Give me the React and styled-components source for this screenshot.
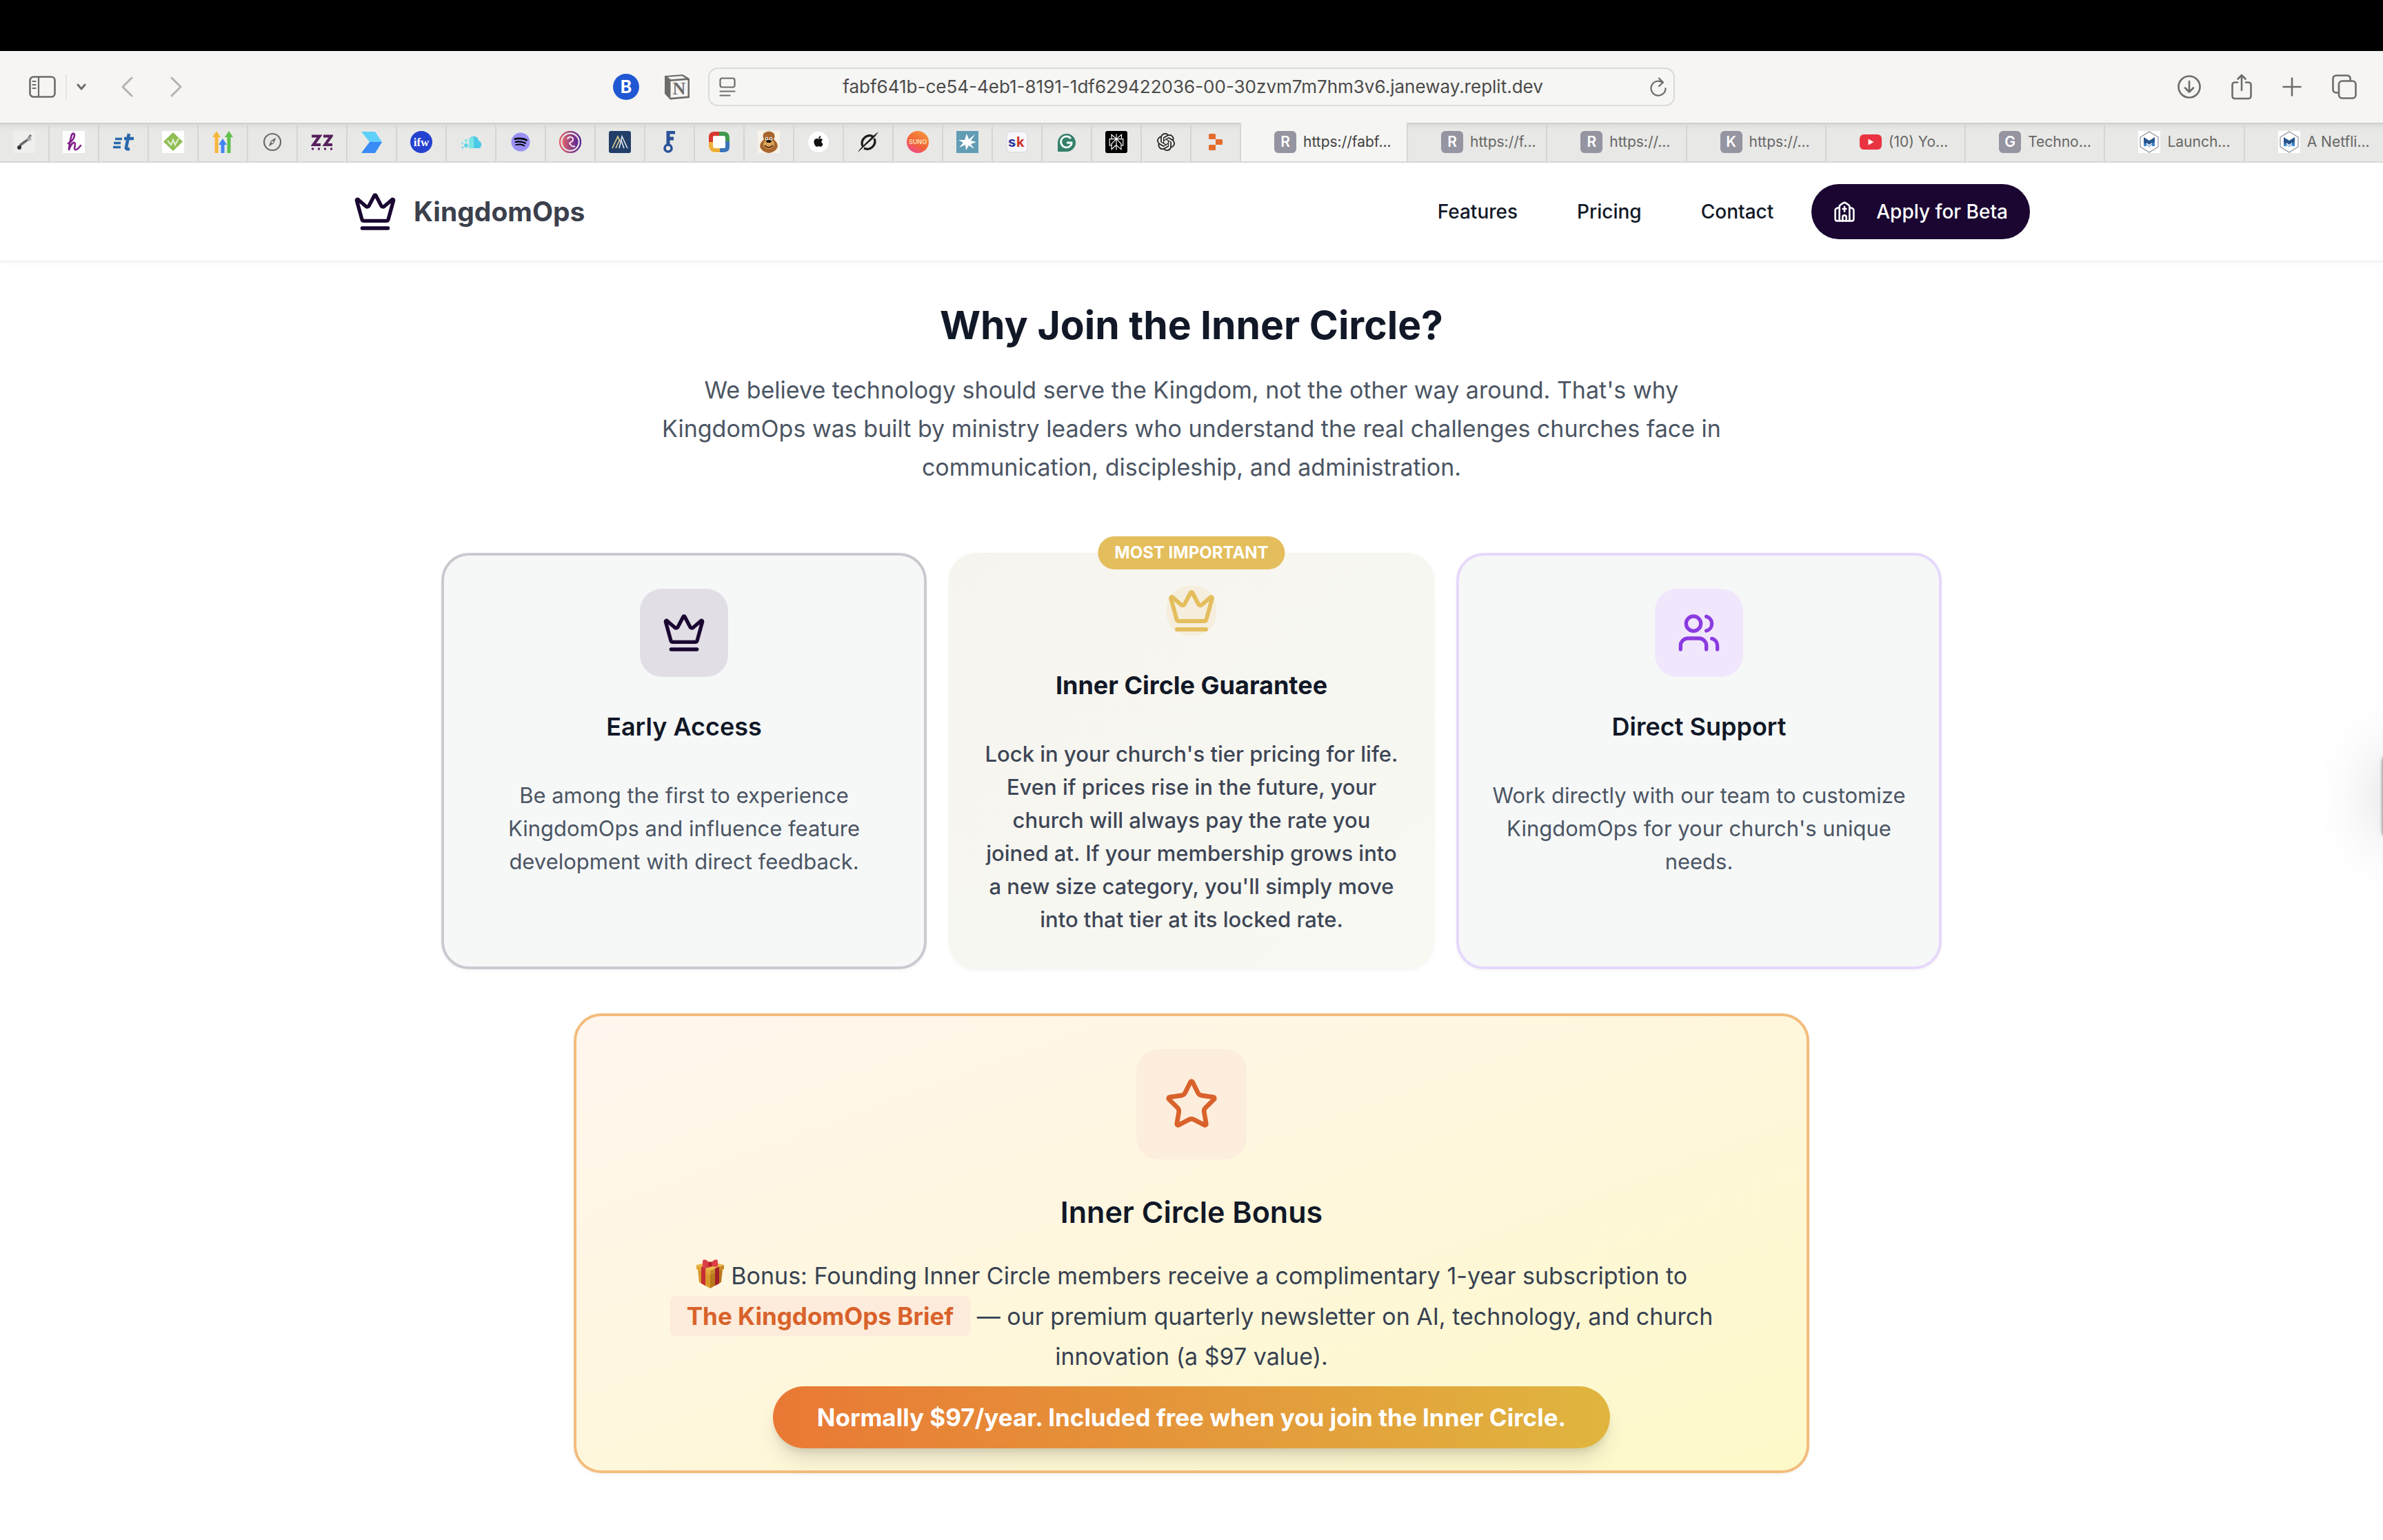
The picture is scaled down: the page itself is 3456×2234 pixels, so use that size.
import React from "react";
import styled, { createGlobalStyle } from "styled-components";
import { Crown, Star, Users } from "lucide-react";
import { FaApple, FaSpotify } from "react-icons/fa";
import { SiOpenai, SiPerplexity, SiReplit } from "react-icons/si";

const GlobalStyle = createGlobalStyle`
  *, *::before, *::after { box-sizing: border-box; }
  body {
    margin: 0;
    background: #ffffff;
    font-family: Inter, "Liberation Sans", sans-serif;
    color: #111827;
    -webkit-font-smoothing: antialiased;
  }
  h1, h2, h3, p { margin: 0; }
  button, input { font: inherit; color: inherit; }
  a { color: inherit; text-decoration: none; }
`;

/* ---------- Browser window ---------- */

const MenuBar = styled.div`
  height: 74px;
  background: #000000;
`;

const Toolbar = styled.div`
  display: grid;
  grid-template-columns: 1fr minmax(600px, 1402px) 1fr;
  align-items: center;
  height: 104px;
  background: #f6f5f3;
  color: #6c6c6a;
`;

const ToolGroup = styled.div`
  display: flex;
  align-items: center;
  gap: 50px;
  padding: 0 ${(p) => p.$right}px 0 ${(p) => p.$left}px;
`;

const ToolSet = styled.div`
  display: flex;
  align-items: center;
  gap: ${(p) => p.$gap}px;
  margin-left: ${(p) => (p.$end ? "auto" : "0")};
`;

const IconButton = styled.button`
  display: flex;
  align-items: center;
  justify-content: center;
  padding: 0;
  border: 0;
  background: none;
  color: ${(p) => (p.$dim ? "#b4b3b1" : "#6c6c6a")};
`;

const Divider = styled.span`
  width: 2px;
  height: 36px;
  background: #e6e5e3;
`;

const AddressBar = styled.div`
  display: flex;
  align-items: center;
  height: 56px;
  padding: 0 10px 0 14px;
  border: 2px solid #dadad8;
  border-radius: 14px;
  background: #f6f6f4;
`;

const AddressInput = styled.input`
  flex: 1;
  min-width: 0;
  padding: 0;
  border: 0;
  outline: 0;
  background: none;
  font-size: 26px;
  line-height: 32px;
  text-align: center;
  color: #4b4b4a;
`;

const TabStrip = styled.div`
  display: flex;
  height: 58px;
  border-bottom: 2px solid #d8d8d6;
  background: #e8e8e6;
`;

const PinnedTab = styled.button`
  display: flex;
  flex: none;
  align-items: center;
  justify-content: center;
  width: 72px;
  padding: 0;
  border: 0;
  border-right: 2px solid #d5d5d3;
  background: linear-gradient(#c8c8c6, #dededc 3px, #e8e8e6 10px);
`;

const Tab = styled.button`
  display: flex;
  flex: ${(p) => (p.$active ? "0 0 242px" : "1 1 0")};
  align-items: center;
  gap: 10px;
  min-width: 0;
  padding: 0 0 0 48px;
  border: 0;
  border-right: 2px solid #d5d5d3;
  background: ${(p) =>
    p.$active ? "#f5f5f3" : "linear-gradient(#c8c8c6, #dededc 3px, #e8e8e6 10px)"};
  color: ${(p) => (p.$active ? "#3f3f3e" : "#666665")};
  font-size: 21px;
  line-height: 32px;
  white-space: nowrap;

  &:last-child { border-right: 0; }
`;

const LetterBadge = styled.span`
  flex: none;
  width: 32px;
  height: 32px;
  border-radius: 6px;
  background: #9594a1;
  color: #ffffff;
  font-size: 21px;
  font-weight: 600;
  line-height: 32px;
  text-align: center;
`;

const Favicon = ({ children, box = 32 }) => (
  <svg width="32" height="32" viewBox={`0 0 ${box} ${box}`} aria-hidden="true">
    {children}
  </svg>
);

const pinnedSites = [
  ["Sketch", (
    <Favicon>
      <rect width="32" height="32" fill="#efefee" />
      <path d="M9 25 L11 20 L22 12 L25 7" fill="none" stroke="#6a6a6a" strokeWidth="3.5" strokeLinecap="round" strokeLinejoin="round" />
      <circle cx="9" cy="24" r="3" fill="#333" />
      <path d="M19 13 L26 6 V14 Z" fill="#a9a9a9" />
    </Favicon>
  )],
  ["Handwriting", (
    <Favicon>
      <rect width="32" height="32" fill="#fff" />
      <path d="M8 18 C13 16 17 10 17 6 C17 2 13 3 12 9 C11 14 9 22 9 28 C10 23 14 16 17 17 C20 18 15 26 18 27 C20 28 23 25 26 21" fill="none" stroke="#82208a" strokeWidth="2.6" strokeLinecap="round" />
    </Favicon>
  )],
  ["Transfer", (
    <Favicon>
      <path d="M4 11.5h10M2 17.5h10M1 23.5h11" stroke="#2968ab" strokeWidth="3.4" />
      <path d="M24 4 L20 24 Q19.500 27 25 26 M17 11 H31" fill="none" stroke="#2968ab" strokeWidth="4.6" />
    </Favicon>
  )],
  ["Growth", (
    <Favicon>
      <rect width="32" height="32" fill="#fff" />
      <path d="M16 2 L30 15.500 L16 29 L2 15.500Z" fill="#8fbd52" />
      <path d="M8 14 L13 20 L16 13 L19 20 L24 11" fill="none" stroke="#dcebc8" strokeWidth="2.4" />
    </Favicon>
  )],
  ["Rankings", (
    <Favicon>
      <path d="M7 32V8" stroke="#f6b73c" strokeWidth="5" />
      <path d="M1 9 L7 0 L13 9Z" fill="#f6b73c" />
      <path d="M16 32V18" stroke="#4285f4" strokeWidth="5" />
      <path d="M10 20 L16 11 L22 20Z" fill="#4285f4" />
      <path d="M25 32V8" stroke="#5fc14a" strokeWidth="5" />
      <path d="M19 9 L25 0 L31 9Z" fill="#5fc14a" />
    </Favicon>
  )],
  ["Start Page", (
    <Favicon>
      <circle cx="16" cy="16" r="12" fill="none" stroke="#6c6c6a" strokeWidth="2.2" />
      <path d="M21.500 9.500 L18 18 L10.500 22.500 L14 14Z" fill="#6c6c6a" />
      <circle cx="16" cy="16" r="1.600" fill="#e8e8e6" />
    </Favicon>
  )],
  ["ZZ", (
    <Favicon>
      <path d="M1 7.500H12.500L3.500 20H14M18 7.500H29.500L20.500 20H31" fill="none" stroke="#57205c" strokeWidth="4.200" />
      <path d="M1 26h30" stroke="#57205c" strokeWidth="3" strokeDasharray="3 6" />
    </Favicon>
  )],
  ["Flow", (
    <Favicon>
      <path d="M1 1 H21 L31 16 H13Z" fill="#5fd0fb" />
      <path d="M13 16 H31 L21 32 H1Z" fill="#3a8af5" />
    </Favicon>
  )],
  ["ifw", (
    <Favicon>
      <circle cx="16" cy="16" r="16" fill="#2441cf" />
      <text x="16" y="22" textAnchor="middle" fontFamily="Liberation Serif, serif" fontWeight="700" fontSize="17" fill="#fff">ifw</text>
    </Favicon>
  )],
  ["Cloud", (
    <Favicon>
      <path d="M13 25 V13 C15 6 26 6 27 14 C33 16 32 25 27 25Z" fill="#4cc9e6" />
      <path d="M13 25 V13 C14 9 18 8 20 9 V25Z" fill="#7ce4e4" />
      <circle cx="9" cy="14" r="2.400" fill="#8fe6ea" />
      <circle cx="9" cy="21" r="3" fill="#63d3e8" />
      <circle cx="3.500" cy="18" r="1.800" fill="#8fe6ea" />
      <circle cx="4" cy="24" r="1.500" fill="#63d3e8" />
    </Favicon>
  )],
  ["Spotify", (
    <Favicon>
      <circle cx="16" cy="16" r="12" fill="#000" />
      <FaSpotify x="2" y="2" size={28} color="#9990f5" />
    </Favicon>
  )],
  ["Relay", (
    <Favicon>
      <defs>
        <linearGradient id="relay" x1="0" x2="1">
          <stop offset="0" stopColor="#e0646a" />
          <stop offset="1" stopColor="#5b2596" />
        </linearGradient>
      </defs>
      <circle cx="16" cy="16" r="15" fill="none" stroke="url(#relay)" strokeWidth="2.400" />
      <circle cx="16" cy="16" r="11.500" fill="url(#relay)" />
      <path d="M12 12 C13 7 21 8 20 13 C20 16 15 16 15 18 C17 20 18 24 23 22" fill="none" stroke="#f6e6ee" strokeWidth="2" />
    </Favicon>
  )],
  ["Summit", (
    <Favicon>
      <rect width="32" height="32" rx="3" fill="#223e69" />
      <path d="M5 25 L13 8 L16 15 M10 25 L16 12" fill="none" stroke="#e8d48e" strokeWidth="1.600" />
      <path d="M15 25 L19 8 L27 25 M22 25 L18 14" fill="none" stroke="#dfe6ee" strokeWidth="1.600" />
    </Favicon>
  )],
  ["Key", (
    <Favicon>
      <path d="M14 20 V2 H24 M14 11 H22" fill="none" stroke="#2a5298" strokeWidth="5" />
      <circle cx="14" cy="25" r="5" fill="none" stroke="#2a5298" strokeWidth="3.600" />
    </Favicon>
  )],
  ["Workspace", (
    <Favicon>
      <rect x="1" y="1" width="30" height="31" rx="9" fill="#fff" />
      <path d="M4 16 V9 Q4 4 9 4 H16" fill="none" stroke="#d8382f" strokeWidth="6" />
      <path d="M16 4 H22 Q28 4 28 10 V15" fill="none" stroke="#3f9a4c" strokeWidth="6" />
      <path d="M28 15 V23 Q28 28 22 28 H17" fill="none" stroke="#3b73b9" strokeWidth="6" />
      <path d="M17 28 H10 Q5 28 4 22 V16" fill="none" stroke="#eeb038" strokeWidth="6" />
      <rect x="7" y="8" width="18" height="17" rx="4" fill="#fff" />
    </Favicon>
  )],
  ["Lion", (
    <Favicon>
      <rect width="32" height="32" fill="#f7f3e6" />
      <path d="M9 3 Q16 -2 23 3 Q26 8 23 12 Q31 19 28 25 Q24 31 16 32 Q8 31 4 25 Q1 19 9 12 Q6 7 9 3Z" fill="#a8662d" />
      <ellipse cx="16" cy="19" rx="8" ry="7" fill="#dba55a" />
      <circle cx="13" cy="11" r="2.200" fill="#fff" />
      <circle cx="19" cy="11" r="2.200" fill="#fff" />
      <circle cx="13" cy="11" r="1" fill="#111" />
      <circle cx="19" cy="11" r="1" fill="#111" />
      <ellipse cx="16" cy="15" rx="4" ry="2" fill="#1c1410" />
      <path d="M10 21 Q16 27 22 21" fill="none" stroke="#5b2f12" strokeWidth="2" />
    </Favicon>
  )],
  ["Apple", (
    <Favicon>
      <circle cx="16" cy="16" r="15" fill="#fff" />
      <FaApple x="7" y="6" size={18} color="#111" />
    </Favicon>
  )],
  ["Grok", (
    <Favicon>
      <path d="M8 22 A11 11 0 0 1 23 8 M25 11 A11 11 0 0 1 10 25" fill="none" stroke="#1b1b1b" strokeWidth="3.200" />
      <path d="M1 31 C6 22 14 17 21 9 L31 1 C26 10 18 15 11 22Z" fill="#1b1b1b" />
    </Favicon>
  )],
  ["Suno", (
    <Favicon>
      <defs>
        <linearGradient id="suno" x1="0.800" y1="0" x2="0.200" y2="1">
          <stop offset="0" stopColor="#f5963a" />
          <stop offset="0.600" stopColor="#f2603a" />
          <stop offset="1" stopColor="#ee4a94" />
        </linearGradient>
      </defs>
      <circle cx="16" cy="16" r="16" fill="url(#suno)" />
      <text x="16" y="19" textAnchor="middle" fontFamily="Inter, sans-serif" fontWeight="600" fontSize="9" fill="#ffe3b8">SUNO</text>
    </Favicon>
  )],
  ["Spark", (
    <Favicon>
      <rect width="32" height="32" fill="#629cb5" />
      <path d="M15 4 L18 12 L27 5 L21 14 L29 16 L21 19 L26 26 L18 21 L14 28 L13 20 L4 24 L10 17 L3 13 L12 13Z" fill="#fff" />
    </Favicon>
  )],
  ["sk", (
    <Favicon>
      <rect x="1" y="1" width="30" height="30" rx="6" fill="#f7f6fa" stroke="#d6d4da" />
      <text x="3" y="23" fontFamily="Inter, sans-serif" fontWeight="700" fontSize="20" fill="#26309a">s</text>
      <text x="15" y="23" fontFamily="Inter, sans-serif" fontWeight="700" fontSize="20" fill="#cf352e">k</text>
    </Favicon>
  )],
  ["Grammarly", (
    <Favicon>
      <path d="M3 30 V16 A13 13 0 1 1 16 30Z" fill="#34806b" />
      <path d="M22 11 A8 8 0 1 0 23 19 V17 H16" fill="none" stroke="#fff" strokeWidth="2.800" />
    </Favicon>
  )],
  ["Perplexity", (
    <Favicon>
      <rect width="32" height="32" rx="3" fill="#000" />
      <SiPerplexity x="4" y="4" size={24} color="#fff" />
    </Favicon>
  )],
  ["OpenAI", (
    <Favicon>
      <SiOpenai x="3" y="3" size={26} color="#222" />
    </Favicon>
  )],
  ["Replit", (
    <Favicon>
      <SiReplit x="4" y="4" size={24} color="#e46c2c" />
    </Favicon>
  )],
];

const YouTubeIcon = () => (
  <Favicon>
    <rect y="5" width="32" height="22" rx="6" fill="#ea3340" />
    <path d="M12.500 11.500 L20.500 16 L12.500 20.500Z" fill="#fff" />
  </Favicon>
);

const HexIcon = () => (
  <Favicon>
    <rect width="32" height="32" fill="#fff" />
    <path d="M16 1 L29 9 V23 L16 31 L3 23 V9Z" fill="none" stroke="#8a8f96" strokeWidth="1.200" />
    <path d="M8 9 L16 14 L24 9 V22 H20 V17 L16 20 L12 17 V22 H8Z" fill="#27548c" />
    <path d="M8 17 L12 19 L16 22 L24 15 V22 H20 V20 L16 23 L12 20 V22 H8Z" fill="#3f86cc" />
  </Favicon>
);

const openTabs = [
  { icon: <LetterBadge>R</LetterBadge>, label: "https://fabf...", active: true },
  { icon: <LetterBadge>R</LetterBadge>, label: "https://f..." },
  { icon: <LetterBadge>R</LetterBadge>, label: "https://..." },
  { icon: <LetterBadge>K</LetterBadge>, label: "https://..." },
  { icon: <YouTubeIcon />, label: "(10) Yo..." },
  { icon: <LetterBadge>G</LetterBadge>, label: "Techno..." },
  { icon: <HexIcon />, label: "Launch..." },
  { icon: <HexIcon />, label: "A Netfli..." },
];

const Glyph = ({ w, h, children, stroke = 2.6 }) => (
  <svg
    width={w}
    height={h}
    viewBox={`0 0 ${w} ${h}`}
    fill="none"
    stroke="currentColor"
    strokeWidth={stroke}
    strokeLinecap="round"
    strokeLinejoin="round"
    aria-hidden="true"
  >
    {children}
  </svg>
);

function BrowserChrome() {
  return (
    <>
      <MenuBar />
      <Toolbar>
        <ToolGroup $left={42} $right={26}>
          <ToolSet $gap={14}>
            <IconButton aria-label="Sidebar">
              <Glyph w={39} h={32}>
                <rect x="1.500" y="1.500" width="36" height="29" rx="5" />
                <path d="M14 2v28M5.500 8h4M5.500 13h4M5.500 18h4" strokeWidth="2.200" />
              </Glyph>
            </IconButton>
            <Divider />
            <IconButton aria-label="Tab groups">
              <Glyph w={14} h={10} stroke={3}><path d="M2 2l5 6 5-6" /></Glyph>
            </IconButton>
          </ToolSet>
          <ToolSet $gap={54}>
            <IconButton $dim aria-label="Back">
              <Glyph w={18} h={30} stroke={3}><path d="M16 2L3 15l13 13" /></Glyph>
            </IconButton>
            <IconButton $dim aria-label="Forward">
              <Glyph w={18} h={30} stroke={3}><path d="M2 2l13 13L2 28" /></Glyph>
            </IconButton>
          </ToolSet>
          <ToolSet $gap={36} $end>
            <IconButton aria-label="B extension">
              <svg width="38" height="38" viewBox="0 0 38 38" aria-hidden="true">
                <circle cx="19" cy="19" r="19" fill="#2058d4" />
                <text x="19" y="28" textAnchor="middle" fontFamily="Inter, sans-serif" fontWeight="700" fontSize="25" fill="#fff">B</text>
              </svg>
            </IconButton>
            <IconButton aria-label="Notion">
              <svg width="38" height="38" viewBox="0 0 38 38" aria-hidden="true">
                <path d="M1 3 L27 1 L37 7 V35 L9 37.500 L1 29Z" fill="#6c6c6a" />
                <path d="M5 4.800 L26 3.200 L31.500 6.500 L10 8.200Z" fill="#f6f5f3" />
                <path d="M9.500 11 L34.500 9 V32.500 L9.500 34.800Z" fill="#f6f5f3" />
                <text x="22" y="30" textAnchor="middle" fontFamily="Liberation Serif, serif" fontWeight="700" fontSize="26" fill="#6c6c6a">N</text>
              </svg>
            </IconButton>
          </ToolSet>
        </ToolGroup>
        <AddressBar>
          <IconButton aria-label="Page menu">
            <Glyph w={24} h={28} stroke={2.2}>
              <rect x="1.500" y="1.500" width="21" height="13" rx="3" />
              <path d="M1.500 20.500h21M1.500 26.500h14" />
            </Glyph>
          </IconButton>
          <AddressInput
            aria-label="Address"
            readOnly
            value="fabf641b-ce54-4eb1-8191-1df629422036-00-30zvm7m7hm3v6.janeway.replit.dev"
          />
          <IconButton aria-label="Reload">
            <Glyph w={24} h={28} stroke={2.2}>
              <path d="M18 7.500A10.500 10.500 0 1 0 22.500 16M13 1.500l6 6-6 5.500" />
            </Glyph>
          </IconButton>
        </AddressBar>
        <ToolGroup $left={40} $right={38}>
          <ToolSet $gap={44} $end>
            <IconButton aria-label="Downloads">
              <Glyph w={34} h={34}>
                <circle cx="17" cy="17" r="15.500" />
                <path d="M17 9v15M11 18.500l6 6 6-6" />
              </Glyph>
            </IconButton>
            <IconButton aria-label="Share">
              <Glyph w={30} h={38}>
                <path d="M9 12.500H5.500Q1.500 12.500 1.500 16V32Q1.500 36 5.500 36H24.500Q28.500 36 28.500 32V16Q28.500 12.500 24.500 12.500H21M15 24V2M9.500 7.500L15 2l5.500 5.500" />
              </Glyph>
            </IconButton>
            <IconButton aria-label="New tab">
              <Glyph w={28} h={28}><path d="M14 1.500v25M1.500 14h25" /></Glyph>
            </IconButton>
            <IconButton aria-label="Tab overview">
              <Glyph w={36} h={36}>
                <rect x="10" y="9.500" width="24.500" height="25" rx="5" />
                <path d="M9.500 26.500H6.500Q1.500 26.500 1.500 22V6.500Q1.500 1.500 6.500 1.500H21.500Q26.500 1.500 26.500 6V9" />
              </Glyph>
            </IconButton>
          </ToolSet>
        </ToolGroup>
      </Toolbar>
      <TabStrip>
        {pinnedSites.map(([name, icon]) => (
          <PinnedTab key={name} aria-label={name}>{icon}</PinnedTab>
        ))}
        {openTabs.map((tab, i) => (
          <Tab key={i} $active={tab.active}>
            {tab.icon}
            <span>{tab.label}</span>
          </Tab>
        ))}
      </TabStrip>
    </>
  );
}

/* ---------- Site ---------- */

const SiteHeader = styled.header`
  border-bottom: 2px solid #f1f1f2;
  box-shadow: 0 2px 6px rgba(0, 0, 0, 0.03);
`;

const HeaderInner = styled.div`
  display: flex;
  align-items: center;
  justify-content: space-between;
  max-width: 2560px;
  height: 142px;
  margin: 0 auto;
  padding: 0 64px;
`;

const Brand = styled.a`
  display: flex;
  align-items: center;
  gap: 24px;
  font-size: 39px;
  font-weight: 700;
  line-height: 56px;
  color: #3b404c;

  svg { color: #1a0631; }
`;

const Nav = styled.nav`
  display: flex;
  align-items: center;
  gap: 24px;
  font-size: 28px;
  font-weight: 500;
  line-height: 40px;
`;

const NavLink = styled.a`
  padding: 0 31px;
`;

const BetaButton = styled.button`
  display: flex;
  align-items: center;
  gap: 30px;
  height: 80px;
  padding: 0 32px;
  border: 0;
  border-radius: 40px;
  background: #1a0631;
  color: #ffffff;
  font-weight: 500;
`;

const Section = styled.main`
  display: flex;
  flex-direction: column;
  align-items: center;
  padding: 56px 64px 96px;
`;

const SectionTitle = styled.h2`
  font-size: 57px;
  font-weight: 700;
  line-height: 72px;
  text-align: center;
`;

const SectionLead = styled.p`
  max-width: 1560px;
  margin-top: 30px;
  font-size: 34px;
  line-height: 56px;
  text-align: center;
  color: #4b5563;
`;

const CardGrid = styled.div`
  display: grid;
  grid-template-columns: repeat(3, 1fr);
  gap: 32px;
  width: 100%;
  max-width: 2176px;
  margin-top: 96px;
`;

const tones = {
  navy: { border: "#cbc8d0", fill: "#f6f8f8", tile: "#e1dfe5", ink: "#1a0631" },
  gold: { fill: "linear-gradient(to bottom right, #f6f4ee, #f8f9f3)", tile: "#f5eedd", ink: "#e4be5d" },
  violet: { border: "#e6d8fc", fill: "#f6f8f8", tile: "#f1e7fd", ink: "#8b3be0" },
};

const Card = styled.article`
  position: relative;
  display: flex;
  flex-direction: column;
  align-items: center;
  padding: 48px;
  border: ${(p) => (p.$tone.border ? `4px solid ${p.$tone.border}` : "0")};
  border-radius: 40px;
  background: ${(p) => p.$tone.fill};
  box-shadow: 0 2px 4px rgba(0, 0, 0, 0.05);
  text-align: center;
`;

const Ribbon = styled.span`
  position: absolute;
  top: -24px;
  left: 50%;
  transform: translateX(-50%);
  padding: 8px 24px;
  border-radius: 24px;
  background: #e4be5d;
  color: #ffffff;
  font-size: 24px;
  font-weight: 700;
  line-height: 32px;
  white-space: nowrap;
`;

const IconTile = styled.div`
  display: flex;
  align-items: center;
  justify-content: center;
  width: ${(p) => p.$size}px;
  height: ${(p) => p.$size}px;
  border-radius: 32px;
  background: ${(p) => p.$fill};
  color: ${(p) => p.$ink};
`;

const CardTitle = styled.h3`
  margin-top: 44px;
  font-size: ${(p) => (p.$large ? 43 : 36)}px;
  font-weight: ${(p) => (p.$strong ? 700 : 600)};
  line-height: ${(p) => (p.$large ? 64 : 56)}px;
`;

const CardText = styled.p`
  margin-top: 48px;
  font-size: 31px;
  font-weight: ${(p) => (p.$strong ? 500 : 400)};
  line-height: 48px;
  color: ${(p) => (p.$strong ? "#3d4656" : "#4b5563")};
`;

const BonusCard = styled.article`
  display: flex;
  flex-direction: column;
  align-items: center;
  width: 100%;
  max-width: 1792px;
  margin-top: 64px;
  padding: 48px 48px 32px;
  border: 4px solid #f3bc7d;
  border-radius: 40px;
  background: linear-gradient(to bottom right, #fff6ee, #fef7dc 50%, #fdf9c8);
  box-shadow: 0 2px 4px rgba(0, 0, 0, 0.05);
  text-align: center;
`;

const BonusText = styled.p`
  max-width: 1560px;
  margin-top: 32px;
  font-size: 34px;
  line-height: 58px;
  color: #374151;

  svg { vertical-align: -6px; }
`;

const BriefTag = styled.strong`
  display: inline-block;
  padding: 0 24px;
  border-radius: 8px;
  background: #fdecdb;
  color: #d9622b;
  font-size: 35px;
  font-weight: 700;
`;

const Offer = styled.div`
  margin-top: 14px;
  padding: 16px 64px;
  border-radius: 45px;
  background: linear-gradient(90deg, #e97935, #e0b53f);
  box-shadow: 0 20px 30px -6px rgba(0, 0, 0, 0.12), 0 8px 12px -4px rgba(0, 0, 0, 0.1);
  color: #ffffff;
  font-size: 35px;
  font-weight: 700;
  line-height: 58px;
`;

const SidePanelHandle = styled.div`
  position: fixed;
  top: 1090px;
  right: -38px;
  width: 40px;
  height: 130px;
  border-radius: 16px;
  background: #b9b9b9;
  box-shadow: 0 0 4px rgba(0, 0, 0, 0.25), 0 0 90px rgba(0, 0, 0, 0.22);
`;

const ChurchIcon = () => (
  <svg
    width="32"
    height="32"
    viewBox="0 0 24 24"
    fill="none"
    stroke="currentColor"
    strokeWidth="2"
    strokeLinecap="round"
    strokeLinejoin="round"
    aria-hidden="true"
  >
    <path d="M6.500 22V6.500C6.500 5.500 7 5 8 4.400L10.800 2.500Q12 1.700 13.200 2.500L16 4.400C17 5 17.500 5.500 17.500 6.500V22" />
    <path d="M6.500 7.500 3.800 8.200Q2 8.800 2 10.500V20Q2 22 4 22H20Q22 22 22 20V10.500Q22 8.800 20.200 8.200L17.500 7.500" />
    <path d="M12 6.800v5M10.200 9h3.600" />
    <path d="M10 22v-4a2 2 0 0 1 4 0v4" />
  </svg>
);

const Gift = () => (
  <svg width="42" height="42" viewBox="0 0 42 42" aria-hidden="true">
    <path d="M3 14 L21 22 V42 L5 33Z" fill="#d99a2b" />
    <path d="M39 14 L21 22 V42 L37 33Z" fill="#b9781d" />
    <path d="M1 8 L21 3 L41 8 L21 16Z" fill="#e9b94a" />
    <path d="M1 8 L21 16 V23 L1 14Z" fill="#e3a836" />
    <path d="M41 8 L21 16 V23 L41 14Z" fill="#c98a25" />
    <path d="M8 10.500 L14 13 V38 L8 35Z" fill="#c62f35" />
    <path d="M34 10.500 L28 13 V38 L34 35Z" fill="#a32029" />
    <path d="M8 10.500 L28 5 L33 7 L14 13Z" fill="#d63f45" />
    <path d="M21 7 C16 -1 10 -1 10 3 V10 C13 12 18 10 21 7Z" fill="#dd3f48" />
    <path d="M21 7 C26 -1 32 -1 32 3 V10 C29 12 24 10 21 7Z" fill="#dd3f48" />
    <rect x="18" y="3.500" width="6" height="7" rx="2" fill="#b8232c" />
  </svg>
);

const benefits = [
  {
    tone: tones.navy,
    icon: Crown,
    title: "Early Access",
    text: "Be among the first to experience KingdomOps and influence feature development with direct feedback.",
  },
  {
    tone: tones.gold,
    icon: Crown,
    ribbon: "MOST IMPORTANT",
    title: "Inner Circle Guarantee",
    text: "Lock in your church's tier pricing for life. Even if prices rise in the future, your church will always pay the rate you joined at. If your membership grows into a new size category, you'll simply move into that tier at its locked rate.",
  },
  {
    tone: tones.violet,
    icon: Users,
    title: "Direct Support",
    text: "Work directly with our team to customize KingdomOps for your church's unique needs.",
  },
];

export default function App() {
  return (
    <>
      <GlobalStyle />
      <BrowserChrome />
      <SiteHeader>
        <HeaderInner>
          <Brand href="#home">
            <Crown size={64} />
            KingdomOps
          </Brand>
          <Nav>
            <NavLink href="#features">Features</NavLink>
            <NavLink href="#pricing">Pricing</NavLink>
            <NavLink href="#contact">Contact</NavLink>
            <BetaButton>
              <ChurchIcon />
              Apply for Beta
            </BetaButton>
          </Nav>
        </HeaderInner>
      </SiteHeader>
      <Section>
        <SectionTitle>Why Join the Inner Circle?</SectionTitle>
        <SectionLead>
          We believe technology should serve the Kingdom, not the other way around. That's why
          KingdomOps was built by ministry leaders who understand the real challenges churches
          face in communication, discipleship, and administration.
        </SectionLead>
        <CardGrid>
          {benefits.map(({ tone, icon: Icon, ribbon, title, text }) => (
            <Card key={title} $tone={tone}>
              {ribbon && <Ribbon>{ribbon}</Ribbon>}
              <IconTile $size={ribbon ? 72 : 128} $fill={tone.tile} $ink={tone.ink}>
                <Icon size={ribbon ? 72 : 64} />
              </IconTile>
              <CardTitle $strong={!!ribbon}>{title}</CardTitle>
              <CardText $strong={!!ribbon}>{text}</CardText>
            </Card>
          ))}
        </CardGrid>
        <BonusCard>
          <IconTile $size={160} $fill="#fdeddc" $ink="#d9622b">
            <Star size={80} />
          </IconTile>
          <CardTitle $large>Inner Circle Bonus</CardTitle>
          <BonusText>
            <Gift /> Bonus: Founding Inner Circle members receive a complimentary 1-year
            subscription to <BriefTag>The KingdomOps Brief</BriefTag> — our premium quarterly
            newsletter on AI, technology, and church innovation (a $97 value).
          </BonusText>
          <Offer>Normally $97/year. Included free when you join the Inner Circle.</Offer>
        </BonusCard>
      </Section>
      <SidePanelHandle />
    </>
  );
}
